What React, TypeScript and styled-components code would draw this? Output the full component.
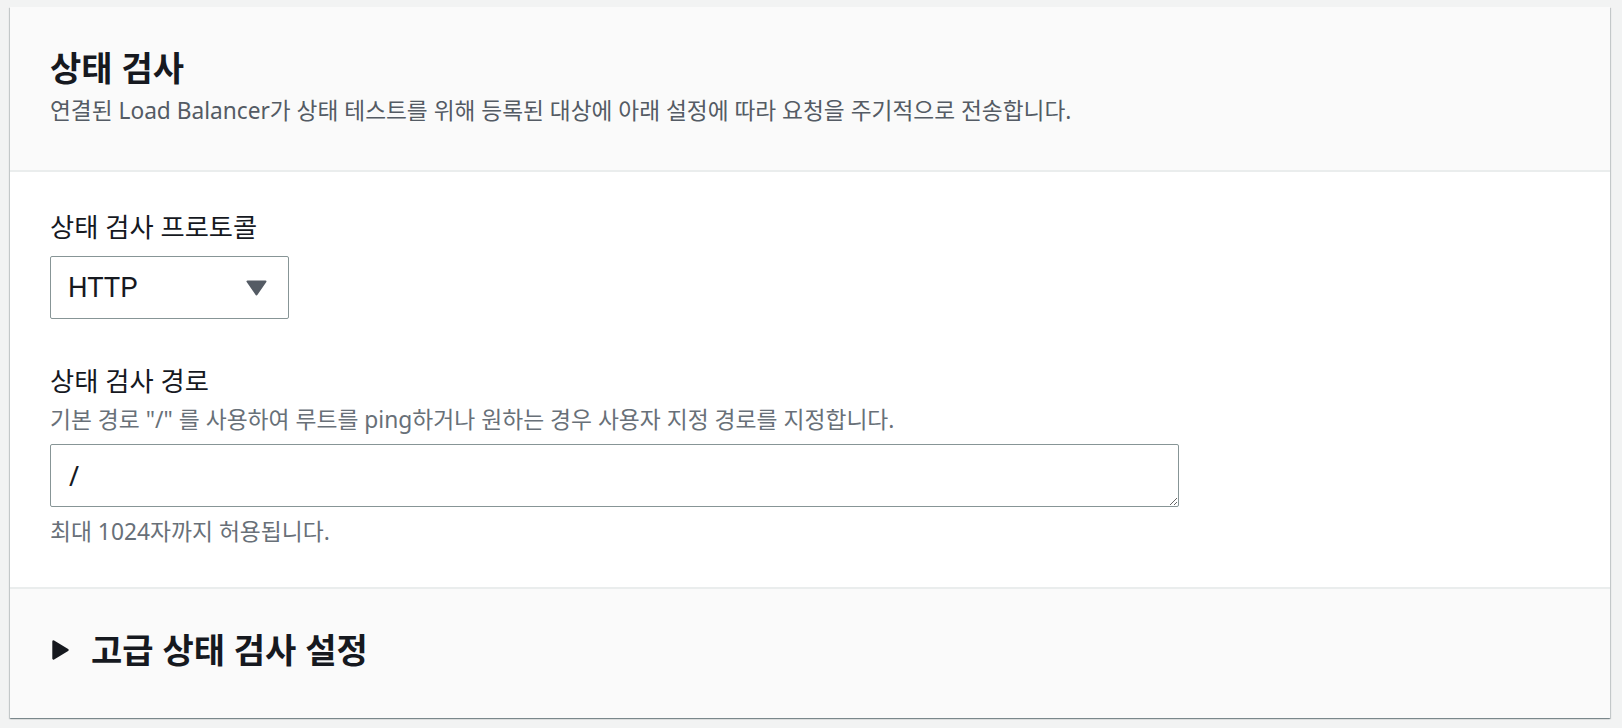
import React from "react";
import styled, { createGlobalStyle } from "styled-components";

const GlobalStyle = createGlobalStyle`
    html, body {
        margin: 0;
        padding: 0;
        background: #f2f3f3;
    }
    body {
        font-family: "Noto Sans", "Noto Sans CJK KR", sans-serif;
        color: #16191f;
    }
`;

const Page = styled.div`
    padding: 7px 12px 11px 10px;
`;

const Card = styled.section`
    background: #ffffff;
    box-shadow: 0 1px 1px 0 rgba(0, 28, 36, 0.3),
        1px 1px 1px 0 rgba(0, 28, 36, 0.15),
        -1px 1px 1px 0 rgba(0, 28, 36, 0.15);
`;

const Header = styled.header`
    background: #fafafa;
    border-bottom: 2px solid #eaeded;
    padding: 39px 40px 42px;
`;

const Title = styled.h2`
    margin: 0;
    font-size: 34px;
    line-height: 44px;
    font-weight: 700;
    color: #16191f;
`;

const Description = styled.p`
    margin: 4px 0 0;
    font-size: 22.7px;
    line-height: 34px;
    color: #545b64;
`;

const Body = styled.div`
    padding: 36px 40px 38px;
    display: flex;
    flex-direction: column;
`;

const Field = styled.div<{ $gap?: number }>`
    display: flex;
    flex-direction: column;
    margin-bottom: ${(p) => p.$gap ?? 0}px;
`;

const Label = styled.label`
    font-size: 26.3px;
    line-height: 38px;
    color: #16191f;
`;

const Hint = styled.div<{ $top?: number; $bottom?: number }>`
    font-size: 22.8px;
    line-height: 34px;
    color: #687078;
    margin-top: ${(p) => p.$top ?? 0}px;
    margin-bottom: ${(p) => p.$bottom ?? 0}px;
`;

const Select = styled.button`
    margin-top: 10px;
    width: 239px;
    height: 63px;
    box-sizing: border-box;
    display: flex;
    align-items: center;
    justify-content: space-between;
    padding: 0 21px 0 17px;
    background: #ffffff;
    border: 1px solid #879596;
    border-radius: 2px;
    font-family: "Roboto", "Noto Sans", sans-serif;
    font-size: 27.5px;
    color: #16191f;
    cursor: pointer;
`;

const TextArea = styled.textarea`
    width: 1129px;
    height: 63px;
    margin-top: 7px;
    box-sizing: border-box;
    padding: 12px 18px;
    border: 1px solid #879596;
    border-radius: 2px;
    font-family: "Noto Sans", "Noto Sans CJK KR", sans-serif;
    font-size: 27px;
    line-height: 37px;
    color: #16191f;
    resize: vertical;
    outline: none;
    overflow: hidden;
`;

const Footer = styled.div`
    background: #fafafa;
    border-top: 2px solid #eaeded;
    padding: 39px 40px 46px 42px;
    display: flex;
    align-items: center;
    gap: 22px;
`;

const ExpandTitle = styled.h3`
    margin: 0;
    font-size: 34px;
    line-height: 44px;
    font-weight: 700;
    color: #16191f;
`;

const Caret = () => (
    <svg width="21" height="16" viewBox="0 0 21 16">
        <path d="M1.5 1.5 H19.5 L10.5 14.5 Z" fill="#545b64" stroke="#545b64" strokeWidth="2" strokeLinejoin="round" />
    </svg>
);

const ExpandIcon = () => (
    <svg width="17" height="20" viewBox="0 0 17 20">
        <path d="M1.5 1.5 L15.5 10 L1.5 18.5 Z" fill="#16191f" stroke="#16191f" strokeWidth="2.4" strokeLinejoin="round" />
    </svg>
);

const App = () => {
    return (
        <Page>
            <GlobalStyle />
            <Card>
                <Header>
                    <Title>상태 검사</Title>
                    <Description>
                        연결된 Load Balancer가 상태 테스트를 위해 등록된 대상에 아래 설정에 따라 요청을 주기적으로 전송합니다.
                    </Description>
                </Header>
                <Body>
                    <Field $gap={43}>
                        <Label>상태 검사 프로토콜</Label>
                        <Select type="button">
                            <span>HTTP</span>
                            <Caret />
                        </Select>
                    </Field>
                    <Field>
                        <Label>상태 검사 경로</Label>
                        <Hint $top={3}>
                            기본 경로 "/" 를 사용하여 루트를 ping하거나 원하는 경우 사용자 지정 경로를 지정합니다.
                        </Hint>
                        <TextArea defaultValue="/" spellCheck={false} />
                        <Hint $top={8}>최대 1024자까지 허용됩니다.</Hint>
                    </Field>
                </Body>
                <Footer>
                    <ExpandIcon />
                    <ExpandTitle>고급 상태 검사 설정</ExpandTitle>
                </Footer>
            </Card>
        </Page>
    );
};

export default App;
